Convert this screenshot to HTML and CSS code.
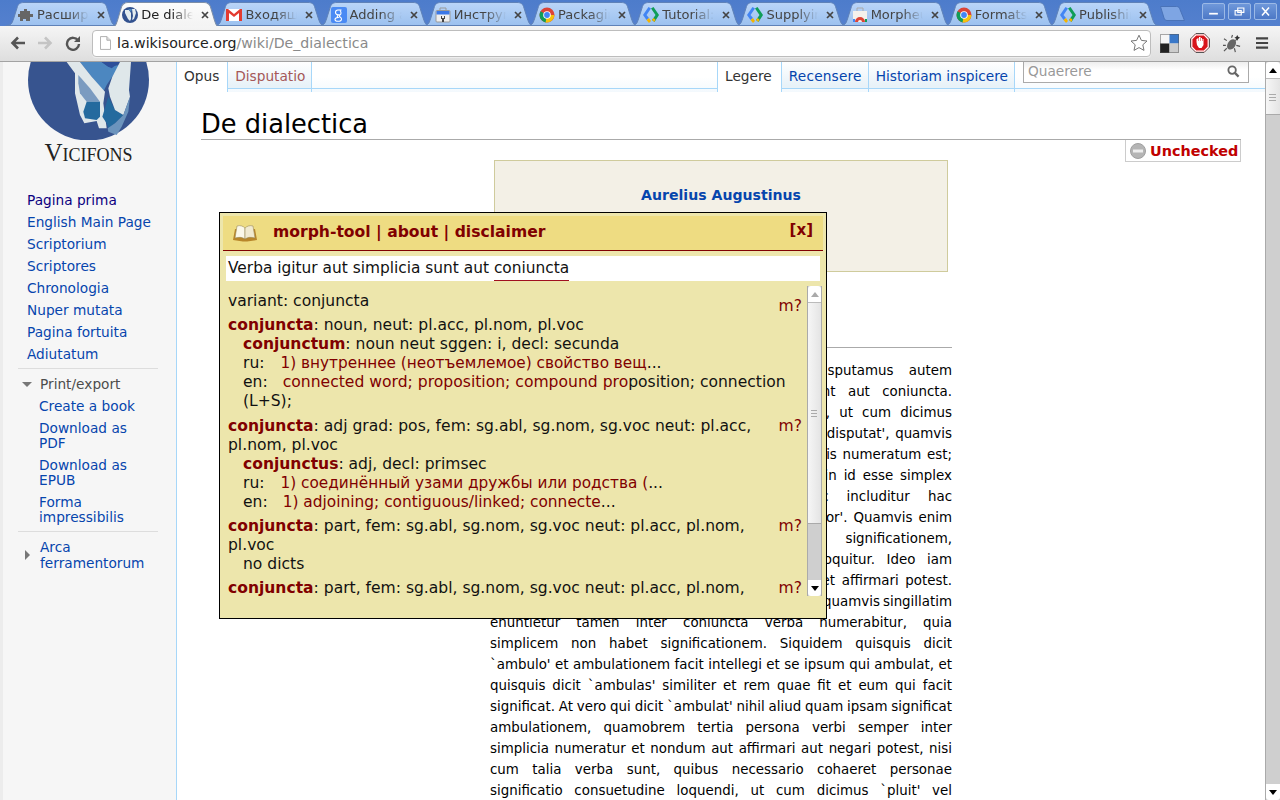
FILE: index.html
```html
<!DOCTYPE html>
<html lang="la">
<head>
<meta charset="utf-8">
<title>De dialectica</title>
<link rel="stylesheet" href="styles.css">
</head>
<body>
<svg class="defs" width="0" height="0">
  <defs>
    <linearGradient id="tg" x1="0" y1="0" x2="0" y2="1"><stop offset="0" stop-color="#bad5f8"/><stop offset="1" stop-color="#9cc1ef"/></linearGradient>
    <linearGradient id="ta" x1="0" y1="0" x2="0" y2="1"><stop offset="0" stop-color="#fcfcfc"/><stop offset="1" stop-color="#f3f3f3"/></linearGradient>
  </defs>
  <symbol id="tabshape" viewBox="0 0 112 24" preserveAspectRatio="none">
    <path d="M0 23.500c5 0 6-2 7.500-6.500L11 6C12 2 14 .5 18 .5h76c4 0 6 1.500 7 5.500l3.500 11c1.500 4.500 2.500 6.500 7.500 6.500z"/>
  </symbol>
  <symbol id="i-chrome" viewBox="0 0 16 16">
    <circle cx="8" cy="8" r="7.500" fill="#db4437"/>
    <path d="M8 8 1.500 4.300A7.500 7.500 0 0 0 7 15.400z" fill="#0f9d58"/>
    <path d="M8 8h7.400A7.500 7.500 0 0 1 6.500 15.400z" fill="#f4c20d"/>
    <circle cx="8" cy="8" r="3.800" fill="#fff"/>
    <circle cx="8" cy="8" r="2.900" fill="#4285f4"/>
  </symbol>
  <symbol id="i-gd" viewBox="0 0 16 16">
    <path d="M5.500 0 0 8l3.500 5 2.500-2-2.500-3L8 1.500z" fill="#4285f4"/>
    <path d="M3.500 13 6 11l2 3-2 2z" fill="#f4b400"/>
    <path d="M10.500 0 16 8l-4.500 7-2.500-2 3.500-5L8 1.500z" fill="#0f9d58"/>
    <path d="M11.500 15 9 13l1.500-2 2 1.500z" fill="#f4b400"/>
  </symbol>
  <symbol id="i-x" viewBox="0 0 8 8">
    <path d="M1 1l6 6M7 1 1 7" stroke="#444" stroke-width="1.700" fill="none"/>
  </symbol>
</svg>

<header class="tabstrip">
  <div class="tab">
    <svg class="shape"><use href="#tabshape"/></svg>
    <svg class="fav" viewBox="0 0 16 16"><path d="M6 2h3v2h3v3h3v3h-3v4H8v-2H5v2H2v-4H0V7h2V4h4z" fill="#666"/></svg>
    <span class="ttl">Расширения</span>
    <svg class="close"><use href="#i-x"/></svg>
  </div>
  <div class="tab active">
    <svg class="shape"><use href="#tabshape"/></svg>
    <svg class="fav" viewBox="0 0 16 16"><circle cx="8" cy="8" r="8" fill="#33528f"/><path d="M3 3h4l2 3v6l-1 2-2-2-3-6zM10 2h3l1 4-2 6-2 1 1-4z" fill="#e4ecef"/><path d="M6 2h4l-1 3z" fill="#4a86c0"/></svg>
    <span class="ttl">De dialectica</span>
    <svg class="close"><use href="#i-x"/></svg>
  </div>
  <div class="tab">
    <svg class="shape"><use href="#tabshape"/></svg>
    <svg class="fav" viewBox="0 0 16 16"><rect y="2" width="16" height="12" fill="#fff"/><path d="M0 2h2l6 5 6-5h2v12h-3V6L8 10 3 6v8H0z" fill="#e33b30"/></svg>
    <span class="ttl">Входящие</span>
    <svg class="close"><use href="#i-x"/></svg>
  </div>
  <div class="tab">
    <svg class="shape"><use href="#tabshape"/></svg>
    <svg class="fav" viewBox="0 0 16 16"><rect width="16" height="16" rx="2" fill="#4a8af4"/><path d="M10.500 3H7C5 3 4.500 4.500 4.500 5.500 4.500 7 6 8 7.500 7.800 6 9 6 10 7 10.500c-2 .2-3 1-3 2 0 1.200 1.500 1.800 3 1.800 2 0 3.500-1 3.500-2.300 0-1.800-2.200-2-2.200-3 0-.8 1.700-1 1.700-3C10 5 9.500 4 9 3.600" fill="none" stroke="#fff" stroke-width="1.100"/></svg>
    <span class="ttl">Adding a</span>
    <svg class="close"><use href="#i-x"/></svg>
  </div>
  <div class="tab">
    <svg class="shape"><use href="#tabshape"/></svg>
    <svg class="fav" viewBox="0 0 16 16"><path d="M5 4V1h6v3" fill="none" stroke="#999"/><rect x="1" y="3.500" width="14" height="11.500" rx="1" fill="#eee" stroke="#999"/><rect x="1.500" y="4" width="13" height="3.500" fill="#3b78e7"/><path d="M6 9h1v2h2V9h1v3H9v3H7v-3H6z" fill="#444"/></svg>
    <span class="ttl">Инструменты</span>
    <svg class="close"><use href="#i-x"/></svg>
  </div>
  <div class="tab">
    <svg class="shape"><use href="#tabshape"/></svg>
    <svg class="fav"><use href="#i-chrome"/></svg>
    <span class="ttl">Packaging</span>
    <svg class="close"><use href="#i-x"/></svg>
  </div>
  <div class="tab">
    <svg class="shape"><use href="#tabshape"/></svg>
    <svg class="fav"><use href="#i-gd"/></svg>
    <span class="ttl">Tutorial: G</span>
    <svg class="close"><use href="#i-x"/></svg>
  </div>
  <div class="tab">
    <svg class="shape"><use href="#tabshape"/></svg>
    <svg class="fav"><use href="#i-gd"/></svg>
    <span class="ttl">Supplying</span>
    <svg class="close"><use href="#i-x"/></svg>
  </div>
  <div class="tab">
    <svg class="shape"><use href="#tabshape"/></svg>
    <svg class="fav" viewBox="0 0 16 16"><path d="M5 4V1h6v3" fill="none" stroke="#aaa"/><rect x="1" y="4" width="14" height="11" fill="#f4f1ec"/><path d="M3 15a5 5 0 0 1 10 0h-3a2 2 0 0 0-4 0z" fill="#db4437"/><path d="M1 12h2v3H1z" fill="#4285f4"/><path d="M13 12h2v3h-2z" fill="#0f9d58"/></svg>
    <span class="ttl">Morpheus</span>
    <svg class="close"><use href="#i-x"/></svg>
  </div>
  <div class="tab">
    <svg class="shape"><use href="#tabshape"/></svg>
    <svg class="fav"><use href="#i-chrome"/></svg>
    <span class="ttl">Formats</span>
    <svg class="close"><use href="#i-x"/></svg>
  </div>
  <div class="tab">
    <svg class="shape"><use href="#tabshape"/></svg>
    <svg class="fav"><use href="#i-gd"/></svg>
    <span class="ttl">Publishing</span>
    <svg class="close"><use href="#i-x"/></svg>
  </div>
  <svg class="newtab" viewBox="0 0 26 15"><path d="M.5.500h16c2 0 3 1 3.500 3l4.500 11H7c-1.500 0-2.500-.8-3-2.500z" fill="#7ea5e3" stroke="#4a73b8"/></svg>
  <div class="winctl">
    <span class="winbtn"><svg viewBox="0 0 24 17"><path d="M7 11h10" stroke="#fff" stroke-width="2"/></svg></span>
    <span class="winbtn"><svg viewBox="0 0 24 17"><path d="M10 4.500h7v5h-7zM7 7.500h7v5H7z" fill="none" stroke="#fff" stroke-width="1.300"/></svg></span>
    <span class="winbtn"><svg viewBox="0 0 24 17"><path d="M8 4l8 9M16 4l-8 9" stroke="#fff" stroke-width="1.800"/></svg></span>
  </div>
</header>

<nav class="toolbar">
  <svg class="navbtn" viewBox="0 0 16 16"><path d="M8 2.500 2.500 8 8 13.500M3 8h12" fill="none" stroke="#555" stroke-width="2.600"/></svg>
  <svg class="navbtn" viewBox="0 0 16 16"><path d="M8 2.500 13.500 8 8 13.500M13 8H1" fill="none" stroke="#c4c4c4" stroke-width="2.600"/></svg>
  <svg class="navbtn" viewBox="0 0 16 16"><path d="M13 5.500A6 6 0 1 0 14 9" fill="none" stroke="#555" stroke-width="2.400"/><path d="M15 1v6H9z" fill="#555"/></svg>
  <div class="omnibox">
    <svg class="pageicon" viewBox="0 0 12 15"><path d="M.5.500h7l4 4v10H.5z" fill="#fff" stroke="#aaa"/><path d="M7.500.500v4h4" fill="#ddd" stroke="#aaa"/></svg>
    <span class="url"><b>la.wikisource.org</b>/wiki/De_dialectica</span>
    <svg class="star" viewBox="0 0 18 18"><path d="M9 1.200l2.400 5.200 5.600.6-4.200 3.800 1.200 5.600L9 13.600l-5 2.800 1.200-5.600L1 7l5.600-.6z" fill="#fff" stroke="#777" stroke-width="1"/></svg>
  </div>
  <svg class="ext" viewBox="0 0 19 19"><rect width="9.500" height="9.500" fill="#f6f6f6"/><rect x="9.500" width="9.500" height="9.500" fill="#3a78c8"/><rect y="9.500" width="9.500" height="9.500" fill="#222"/><rect x="9.500" y="9.500" width="9.500" height="9.500" fill="#ccc"/><rect x=".5" y=".5" width="18" height="18" fill="none" stroke="#555" stroke-opacity=".5"/></svg>
  <svg class="ext adb" viewBox="0 0 20 20"><path d="M6 .5h8L19.500 6v8L14 19.500H6L.5 14V6z" fill="#d8141a" stroke="#555"/><path d="M6 1.800h8L18.200 6v8L14 18.200H6L1.800 14V6z" fill="none" stroke="#fff" stroke-width="1.200"/><path d="M6.500 9V6h1V5h1v3h.5V4h1.500v4h.5V5h1v3h.5V6h1v6l-2 3H9l-2-3z" fill="#fff"/></svg>
  <svg class="ext bug" viewBox="0 0 20 20"><ellipse cx="9" cy="11" rx="4" ry="6" transform="rotate(35 9 11)" fill="#666"/><path d="M13 7l3-3M4 7 1 5M3 12H0M4 15l-3 3M9 4l1-3M14 12l4 1M12 15l1 4" stroke="#555" stroke-width="1.200"/><path d="M15 1l1 2 2 1-2 1-1 2-1-2-2-1 2-1z" fill="#333"/></svg>
  <svg class="menu" viewBox="0 0 14 14"><path d="M0 2h13M0 7h13M0 12h13" stroke="#444" stroke-width="2.400"/></svg>
</nav>

<main class="viewport">
  <aside class="sidebar">
    <div class="logo">
      <svg class="logo-art" viewBox="0 0 122 78">
        <circle cx="60.500" cy="18" r="60.500" fill="#37548f"/>
        <g transform="translate(-3 -2) scale(.33333)">
          <path d="M165 6h65l20 14 35-5-20 30-20 30-10 20-35-45z" fill="#4c87c0"/>
          <path d="M230 6h55l-25 19-10 -5z" fill="#2d4f9a"/>
          <path d="M125 6h40l35 44 40 45-5 35 10 75h-23l-7-22-37 7-13-25-15-65V40z" fill="#dfe7ea"/>
          <path d="M160 45l35 40 30 40h-40l-20-25-5-30z" fill="#7a9bc0"/>
          <path d="M185 125h40v45l-10 10-35-5-5-20z" fill="#246a9e"/>
          <path d="M250 110l20 40 25 15-25 25-20 15-5-15-13-20z" fill="#246a9e"/>
          <path d="M285 6h33l-6 84 3 20-20 55-25-15-15-40-5-25 12-35z" fill="#dfe7ea"/>
          <path d="M315 110l-5 45-20 45-15 25-25-10-2-10 22-15 25-25z" fill="#6c94bd"/>
        </g>
      </svg>
      <div class="wordmark">Vicifons</div>
    </div>
    <ul class="nav-main">
      <li><a class="visited">Pagina prima</a></li>
      <li><a>English Main Page</a></li>
      <li><a>Scriptorium</a></li>
      <li><a>Scriptores</a></li>
      <li><a>Chronologia</a></li>
      <li><a>Nuper mutata</a></li>
      <li><a>Pagina fortuita</a></li>
      <li><a>Adiutatum</a></li>
    </ul>
    <section class="portal">
      <h3 class="open">Print/export</h3>
      <ul>
        <li><a>Create a book</a></li>
        <li><a>Download as PDF</a></li>
        <li><a>Download as EPUB</a></li>
        <li><a>Forma impressibilis</a></li>
      </ul>
    </section>
    <section class="portal last">
      <h3 class="shut"><a>Arca ferramentorum</a></h3>
    </section>
  </aside>

  <div class="page">
    <div class="head">
      <div class="tabs left">
        <span class="vtab sel">Opus</span>
        <span class="vtab new">Disputatio</span>
      </div>
      <div class="tabs right">
        <span class="vtab sel">Legere</span>
        <span class="vtab wide">Recensere</span>
        <span class="vtab">Historiam inspicere</span>
      </div>
      <div class="search">
        <span>Quaerere</span>
        <svg viewBox="0 0 14 14"><circle cx="5.500" cy="5.500" r="4" fill="none" stroke="#666" stroke-width="2"/><path d="M8.500 8.500l4 4" stroke="#666" stroke-width="2.400"/></svg>
      </div>
    </div>

    <article class="content">
      <h1>De dialectica</h1>
      <div class="status">
        <svg viewBox="0 0 16 16"><circle cx="8" cy="8" r="7.500" fill="#b5b5b5" stroke="#a0a0a0"/><rect x="3" y="6.500" width="10" height="3" fill="#eee"/></svg>
        <b>Unchecked</b>
      </div>
      <div class="headerbox"><a>Aurelius Augustinus</a></div>
      <h2>I. De simplicibus verbis</h2>
      <div class="text">
        <span>Dialectica est bene disputandi scientia. Disputamus autem</span>
        <span>utique verbis. Verba igitur aut simplicia sunt aut coniuncta.</span>
        <span>Simplicia sunt quae unum quiddam significant, ut cum dicimus</span>
        <span>'loquor', 'ambulat', 'currit', 'scribit', 'homo', 'vir', 'disputat', quamvis</span>
        <span>hoc unum verbum in syllabas divisum et in litteris numeratum est;</span>
        <span>sed unam rem significat, ita ut non possit dici in id esse simplex</span>
        <span>quod dicitur. Sensu etenim loquentis hic includitur hac</span>
        <span>significatione sua, ut sit unum hoc verbum 'loquor'. Quamvis enim</span>
        <span>ista persona habet unam significationem,</span>
        <span>sicut cum dicimus id quod quisque homo loquitur. Ideo iam</span>
        <span>hoc tale et quidquid dictum est, negari tamen et affirmari potest.</span>
        <span>itaque et cum quodlibet verbum hoc modo dicitur, quamvis singillatim</span>
        <span>enuntietur tamen inter coniuncta verba numerabitur, quia</span>
        <span>simplicem non habet significationem. Siquidem quisquis dicit</span>
        <span>`ambulo' et ambulationem facit intellegi et se ipsum qui ambulat, et</span>
        <span>quisquis dicit `ambulas' similiter et rem quae fit et eum qui facit</span>
        <span>significat. At vero qui dicit `ambulat' nihil aliud quam ipsam significat</span>
        <span>ambulationem, quamobrem tertia persona verbi semper inter</span>
        <span>simplicia numeratur et nondum aut affirmari aut negari potest, nisi</span>
        <span>cum talia verba sunt, quibus necessario cohaeret personae</span>
        <span>significatio consuetudine loquendi, ut cum dicimus `pluit' vel</span>
      </div>
    </article>

    <div class="popup">
      <div class="pop-head">
        <svg class="book" viewBox="0 0 26 20"><path d="M1 17 3 6l9 1 1 2 1-2 9-1 2 11-10 1.500h-4z" fill="#b8862a"/><path d="M3 15 5 3c3-1 6 0 8 2v11c-3-2-6-2-10-1z" fill="#fbf8ea" stroke="#9a8a55" stroke-width=".6"/><path d="M23 15 21 3c-3-1-6 0-8 2v11c3-2 6-2 10-1z" fill="#f1ead0" stroke="#9a8a55" stroke-width=".6"/></svg>
        <b class="pop-title">morph-tool | about | disclaimer</b>
        <b class="pop-x">[x]</b>
      </div>
      <div class="sentence">Verba igitur aut simplicia sunt aut <u>coniuncta</u></div>
      <div class="pop-body">
        <div class="results">
          <div class="entry"><i class="m first">m?</i>variant: conjuncta</div>
          <div class="entry"><b>conjuncta</b>: noun, neut: pl.acc, pl.nom, pl.voc
            <div class="sub"><b>conjunctum</b>: noun neut sggen: i, decl: secunda</div>
            <div class="sub">ru:<em class="gl">1) внутреннее (неотъемлемое) свойство вещ</em>...</div>
            <div class="sub">en:<em class="gl g2">connected word; proposition; compound pro</em>position; connection (L+S);</div>
          </div>
          <div class="entry"><i class="m">m?</i><b>conjuncta</b>: adj grad: pos, fem: sg.abl, sg.nom, sg.voc neut: pl.acc, pl.nom, pl.voc
            <div class="sub"><b>conjunctus</b>: adj, decl: primsec</div>
            <div class="sub">ru:<em class="gl">1) соединённый узами дружбы или родства (</em>...</div>
            <div class="sub">en:<em class="gl g3">1) adjoining; contiguous/linked; connecte</em>...</div>
          </div>
          <div class="entry"><i class="m">m?</i><b>conjuncta</b>: part, fem: sg.abl, sg.nom, sg.voc neut: pl.acc, pl.nom, pl.voc
            <div class="sub">no dicts</div>
          </div>
          <div class="entry"><i class="m">m?</i><b>conjuncta</b>: part, fem: sg.abl, sg.nom, sg.voc neut: pl.acc, pl.nom, pl.voc</div>
        </div>
        <div class="sbar small">
          <span class="sb-btn up"></span>
          <span class="sb-thumb"></span>
          <span class="sb-track"></span>
          <span class="sb-btn down"></span>
        </div>
      </div>
    </div>
  </div>

  <div class="sbar page-sb">
    <span class="sb-btn up"></span>
    <span class="sb-thumb"></span>
    <span class="sb-track"></span>
    <span class="sb-btn down"></span>
  </div>
</main>
</body>
</html>
```
FILE: styles.css
```css
* { box-sizing: border-box; }
html, body { margin: 0; height: 800px; overflow: hidden; }
body { font-family: "DejaVu Sans", sans-serif; font-size: 14px; background: #fff; color: #000; display: flex; flex-direction: column; }
ul { list-style: none; margin: 0; padding: 0; }
a { color: #0645ad; }
.defs { position: absolute; }

/* window chrome */
.tabstrip { height: 26px; flex: none; display: flex; padding: 2px 3px 0 6px; overflow: hidden; background: linear-gradient(#4d7ccb, #5480ce); }
.tab { position: relative; width: 112px; height: 24px; margin-right: -7.8px; flex: none; font-size: 13px; color: #444; }
.shape { position: absolute; left: 0; top: 0; width: 112px; height: 24px; fill: url(#tg); stroke: #5f82b8; }
.tab.active { z-index: 2; color: #222; }
.tab.active .shape { height: 26px; fill: url(#ta); stroke: #7c8ea8; }
.fav { position: absolute; left: 12px; top: 5px; width: 16px; height: 16px; }
.ttl { position: absolute; left: 31px; top: 5px; width: 52px; overflow: hidden; white-space: nowrap; line-height: 16px; -webkit-mask-image: linear-gradient(90deg, #000 60%, transparent); mask-image: linear-gradient(90deg, #000 60%, transparent); }
.close { position: absolute; left: 91px; top: 9px; width: 8px; height: 8px; }
.newtab { width: 26px; height: 15px; margin: 4px 0 0 8px; flex: none; }
.winctl { margin-left: auto; display: flex; gap: 3px; height: 17px; margin-top: 1px; }
.winbtn { width: 23px; height: 17px; border: 1px solid #9bb9e6; border-radius: 2px; background: linear-gradient(#6f98da, #4c78c6); }
.winbtn svg { display: block; width: 100%; height: 100%; }

.toolbar { height: 36px; flex: none; display: flex; align-items: center; padding: 0 9px 1px 10px; background: linear-gradient(#f5f5f5, #dedede); border-bottom: 1px solid #a3a3a3; }
.navbtn { width: 16px; height: 16px; margin-right: 11px; flex: none; }
.navbtn:nth-child(2) { margin-right: 12px; }
.omnibox { width: 1059px; height: 27px; display: flex; align-items: center; padding: 0 2px 0 7px; background: #fff; border: 1px solid #bdbdbd; border-radius: 4px; box-shadow: 0 1px 0 #eee; flex: none; }
.pageicon { width: 11px; height: 14px; flex: none; }
.url { margin-left: 6px; font-size: 14.160px; color: #8a8a8a; }
.url b { font-weight: normal; color: #222; }
.star { width: 18px; height: 18px; margin-left: auto; }
.ext { width: 19px; height: 19px; flex: none; margin-left: 9px; }
.adb { margin-left: 11px; width: 20px; height: 20px; }
.bug { margin-left: 13px; }
.menu { width: 13px; height: 14px; margin-left: 14px; flex: none; }

/* viewport */
.viewport { flex: 1; min-height: 0; display: flex; position: relative; overflow: hidden; }
.sidebar { width: 177px; flex: none; background: #f6f6f6; border-right: 1px solid #a7d7f9; border-left: 3px solid #ececec; font-size: 13.700px; }
.logo { height: 127px; display: flex; flex-direction: column; align-items: center; }
.logo-art { width: 122px; height: 78px; margin-left: -1px; flex: none; display: block; }
.wordmark { font-family: "Liberation Serif", serif; font-variant: small-caps; font-size: 25px; line-height: 24px; margin: 1px 0 0 -2px; color: #222; }
.nav-main { padding-left: 24px; }
.nav-main li { height: 22px; line-height: 22px; white-space: nowrap; }
a.visited { color: #0b0080; }
.portal { margin: 3px 18px 0 15px; padding-top: 4px; border-top: 1px solid #ddd; }
.portal h3 { margin: 0; font-size: 13.700px; font-weight: normal; color: #4d4d4d; line-height: 22px; position: relative; padding-left: 22px; }
.portal h3::before { content: ""; position: absolute; }
.open::before { left: 4px; top: 9px; border: 5px solid transparent; border-top: 5px solid #777; border-bottom: 0; }
.shut::before { left: 7px; top: 11px; border: 5px solid transparent; border-left: 5px solid #777; border-right: 0; }
.portal li { padding: 3.500px 12px 3.500px 21px; line-height: 15px; }
.portal.last { padding-top: 7px; }
.portal h3.shut { line-height: 16px; }
.shut a { display: block; }

/* page */
.page { flex: 1; min-width: 0; position: relative; }
.head { height: 30px; display: flex; position: relative; padding-bottom: 4px; background: linear-gradient(#fff 50%, #f3f9fd); }
.head::after { content: ""; position: absolute; left: 0; right: 0; bottom: 3px; height: 1px; background: #a7d7f9; }
.tabs { display: flex; }
.tabs.right { margin-left: auto; }
.vtab { position: relative; z-index: 1; height: 30px; margin-bottom: -4px; padding: 0 6px 0 7px; line-height: 29px; white-space: nowrap; font-size: 13.700px; color: #0645ad; background: linear-gradient(#fff, #e8f2f8 90%); background-size: 100% 26px; background-repeat: no-repeat; border-right: 1px solid #a7d7f9; }
.vtab.sel { color: #333; background: #fff; border-right-color: #a7d7f9; }
.left .vtab.sel { padding-right: 8px; }
.tabs .vtab.new { color: #a55858; }
.tabs.right .vtab.sel { border-left: 1px solid #a7d7f9; padding-right: 9px; }
.vtab.wide { letter-spacing: .2px; }
.search { width: 226px; height: 21px; margin: 0 16px 0 8px; padding: 0 8px 2px 4px; display: flex; align-items: center; justify-content: space-between; border: 1px solid #aaa; border-top: 0; background: linear-gradient(#eee, #fff 40%); color: #999; font-size: 13.700px; position: relative; z-index: 1; }
.search svg { width: 13px; height: 13px; }

.content { padding: 0 24px 0 24px; position: relative; }
.content h1 { margin: 15px 0 0; height: 33px; font-size: 25.700px; line-height: 34px; font-weight: normal; border-bottom: 1px solid #aaa; }
.status { position: absolute; top: 33px; right: 24px; width: 116px; height: 22px; display: flex; align-items: center; gap: 4px; padding-left: 4px; border: 1px solid #ccc; border-top: 0; background: #fff; }
.status svg { width: 16px; height: 16px; flex: none; }
.status b { color: #c00000; font-size: 14.400px; }
.headerbox { width: 454px; height: 112px; margin: 20px 0 0 293px; padding-top: 26px; border: 1px solid #cfcb9c; background: #f3f0e6; text-align: center; font-weight: bold; font-size: 14.100px; }
.content h2 { width: 462px; margin: 50px 0 0 289px; height: 26px; font-size: 17px; line-height: 25px; font-weight: normal; border-bottom: 1px solid #aaa; }
.text { width: 462px; margin: 12px 0 0 289px; font-size: 13.400px; line-height: 21px; word-spacing: -1.200px; }
.text span { display: block; text-align: justify; text-align-last: justify; }

/* popup */
.popup { position: absolute; left: 42px; top: 150px; width: 608px; height: 407px; padding: 3px; border: 1px solid #000; background: #ede6ac; font-size: 15.400px; color: #111; z-index: 5; }
.pop-head { height: 35px; display: flex; align-items: center; padding: 0 10px 0 9px; background: #eedc82; border-bottom: 1px solid #800000; color: #800000; }
.book { width: 26px; height: 20px; flex: none; }
.pop-title { margin-left: 15px; margin-top: -3px; font-size: 15.600px; }
.pop-x { margin-left: auto; margin-top: -7px; font-size: 15px; }
.sentence { height: 25px; margin: 5px 3px 0; padding-left: 2px; background: #fff; line-height: 25px; white-space: nowrap; }
.sentence u { text-decoration: none; border-bottom: 1px solid #a01020; padding-bottom: 3px; }
.pop-body { display: flex; height: 310px; margin-top: 5px; padding: 0 1px 0 5px; }
.results { flex: 1; min-width: 0; height: 310px; overflow: hidden; padding: 6px 5px 0 0; line-height: 19px; font-size: 15.550px; }
.entry { margin-bottom: 5.300px; }
.entry b { color: #800000; }
.m { float: right; font-style: normal; color: #800000; }
.m.first { margin-top: 5px; }
.sub { padding-left: 15px; }
.gl { font-style: normal; color: #800000; margin-left: 16px; font-size: 15.300px; }
.g2 { margin-left: 15px; font-size: 15.600px; }
.g3 { margin-left: 15px; font-size: 15.400px; }

/* scrollbars */
.sbar { width: 15px; flex: none; display: flex; flex-direction: column; background: #cfcfcf; border-left: 1px solid #aaa; }
.sb-btn { height: 16px; flex: none; background: #fff; position: relative; border-radius: 3px 3px 0 0; }
.sb-btn::after { content: ""; position: absolute; left: 3px; top: 6px; border: 4px solid transparent; border-top: 0; border-bottom: 5px solid #000; }
.sb-btn.down { border-radius: 0 0 3px 3px; }
.sb-btn.down::after { border-bottom: 0; border-top: 5px solid #000; }
.sb-thumb { flex: none; background: linear-gradient(90deg, #f6f6f6, #e4e4e4); border-top: 1px solid #bbb; border-bottom: 1px solid #aaa; position: relative; }
.sb-thumb::after { content: ""; position: absolute; left: 3px; right: 4px; top: 50%; height: 7px; margin-top: -3px; background: repeating-linear-gradient(#aaa 0 1px, transparent 1px 3px); }
.sb-track { flex: 1; }
.page-sb { width: 15px; height: 738px; }
.page-sb .sb-thumb { height: 37px; }
.small { height: 310px; border-right: 1px solid #aaa; }
.small .sb-thumb { height: 222px; }
.small .sb-btn.up::after { border-bottom-color: #aaa; }
```
